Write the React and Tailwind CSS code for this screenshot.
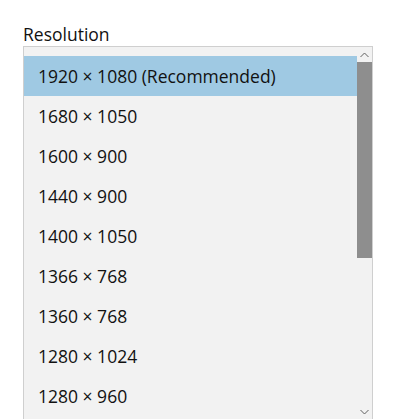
const resolutions = [
  '1920 × 1080 (Recommended)',
  '1680 × 1050',
  '1600 × 900',
  '1440 × 900',
  '1400 × 1050',
  '1366 × 768',
  '1360 × 768',
  '1280 × 1024',
  '1280 × 960',
];

export default function App() {
  return (
    <div className="w-[401px] h-[419px] overflow-hidden bg-white pl-[23px] pt-[22px] text-[#111] font-['Open_Sans','Noto_Sans',sans-serif]">
      <div className="text-[17.5px] leading-[24px] h-[24px]">Resolution</div>

      {/* List box */}
      <div className="flex w-[350px] h-[380px] border-t border-x border-[#cfcfcf] bg-[#f2f2f2] overflow-hidden">
        <div className="flex-1 pt-[9px]">
          {resolutions.map((r, i) => (
            <div
              key={r}
              className={`h-10 flex items-center pl-[14px] text-[17.5px] ${
                i === 0 ? 'bg-[#9fc9e3]' : ''
              }`}
            >
              {r}
            </div>
          ))}
        </div>

        {/* Scrollbar */}
        <div className="w-[15px] flex flex-col items-center bg-[#f2f2f2]">
          <div className="h-[15px] flex items-center justify-center">
            <svg width="9" height="6" viewBox="0 0 9 6" fill="none" stroke="#606060" strokeWidth="1">
              <path d="M0.5 5L4.5 1L8.5 5" />
            </svg>
          </div>
          <div className="w-full h-[196px] bg-[#8e8e8e]" />
          <div className="flex-1" />
          <div className="h-[15px] mb-[7px] flex items-center justify-center">
            <svg width="9" height="6" viewBox="0 0 9 6" fill="none" stroke="#606060" strokeWidth="1">
              <path d="M0.5 1L4.5 5L8.5 1" />
            </svg>
          </div>
        </div>
      </div>
    </div>
  );
}
